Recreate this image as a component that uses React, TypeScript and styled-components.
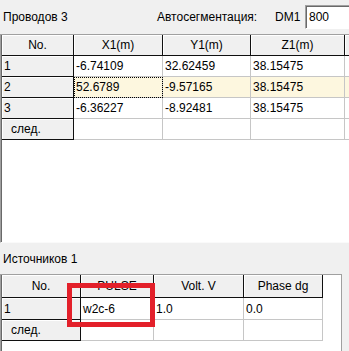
import React from "react";
import styled, { createGlobalStyle, css } from "styled-components";

type Kind = "head" | "fixed" | "next" | "data" | "sel";

type ColType = { title: string; width: number };
type RowType = { cells: string[]; kind?: "sel"; focus?: number };

const wireCols: ColType[] = [
    { title: "No.", width: 72 },
    { title: "X1(m)", width: 89 },
    { title: "Y1(m)", width: 88 },
    { title: "Z1(m)", width: 94 },
    { title: "", width: 100 },
];

const wireRows: RowType[] = [
    { cells: ["1", "-6.74109", "32.62459", "38.15475", ""] },
    { cells: ["2", "52.6789", "-9.57165", "38.15475", ""], kind: "sel", focus: 1 },
    { cells: ["3", "-6.36227", "-8.92481", "38.15475", ""] },
];

const srcCols: ColType[] = [
    { title: "No.", width: 79 },
    { title: "PULSE", width: 73 },
    { title: "Volt. V", width: 90 },
    { title: "Phase dg", width: 79 },
];

const srcRows: RowType[] = [{ cells: ["1", "w2c-6", "1.0", "0.0"] }];

const Grid = (props: {
    cols: ColType[]
    rows: RowType[]
    headH: number
    rowH: number[]
    height: number
    width?: number
}) => {
    return (
        <Frame $height={props.height} $width={props.width}>
            <Inner>
                <Row $h={props.headH}>
                    {props.cols.map((c, i) => (
                        <Cell key={i} $w={c.width} $kind="head">{c.title}</Cell>
                    ))}
                </Row>
                {props.rows.map((r, ri) => (
                    <Row key={ri} $h={props.rowH[ri]}>
                        {r.cells.map((v, ci) => (
                            <Cell
                                key={ci}
                                $w={props.cols[ci].width}
                                $kind={ci === 0 ? "fixed" : r.kind || "data"}
                                $focus={r.focus === ci}
                            >
                                {v}
                            </Cell>
                        ))}
                    </Row>
                ))}
                <Row $h={props.rowH[props.rows.length]}>
                    {props.cols.map((c, i) => (
                        <Cell key={i} $w={c.width} $kind={i === 0 ? "next" : "data"}>
                            {i === 0 ? "след." : ""}
                        </Cell>
                    ))}
                </Row>
            </Inner>
        </Frame>
    );
};

export default function App() {
    return (
        <>
            <GlobalStyle />
            <Page>
                <TopBar>
                    <Caption>Проводов 3</Caption>
                    <AutoLabel>Автосегментация:</AutoLabel>
                    <DmLabel>DM1</DmLabel>
                    <ValueBox>800</ValueBox>
                </TopBar>
                <Grid cols={wireCols} rows={wireRows} headH={21} rowH={[21, 21, 21, 21]} height={209} />
                <SectionTitle>Источников 1</SectionTitle>
                <Grid cols={srcCols} rows={srcRows} headH={23} rowH={[22, 21]} height={90} width={342} />
                <Marker />
            </Page>
        </>
    );
}

const GlobalStyle = createGlobalStyle`
    html, body {
        margin: 0;
        padding: 0;
        background: #f0f0f0;
    }
    body {
        font-family: "Liberation Sans", Arial, sans-serif;
        font-size: 12px;
        color: #000;
    }
`
const Page = styled.div`
    position: relative;
    width: 349px;
    height: 351px;
    overflow: hidden;
    background: #f0f0f0;
`
const TopBar = styled.div`
    display: flex;
    align-items: center;
    height: 34px;
    white-space: nowrap;
`
const Caption = styled.div`
    width: 154px;
    padding-left: 3px;
    flex-shrink: 0;
`
const AutoLabel = styled.div`
    width: 118px;
    flex-shrink: 0;
`
const DmLabel = styled.div`
    width: 30px;
    flex-shrink: 0;
`
const ValueBox = styled.div`
    box-sizing: border-box;
    flex-shrink: 0;
    width: 60px;
    height: 24px;
    margin-top: -1px;
    padding-left: 3px;
    display: flex;
    align-items: center;
    background: #fff;
    border: 1px solid;
    border-color: #a0a0a0 #fff #fff #a0a0a0;
    box-shadow: inset 1px 1px 0 #696969;
`
const Frame = styled.div<{ $height: number; $width?: number }>`
    box-sizing: border-box;
    height: ${p => p.$height}px;
    width: ${p => (p.$width ? p.$width + "px" : "600px")};
    background: #fff;
    border-top: 1px solid #a0a0a0;
    border-left: 1px solid #a0a0a0;
    border-bottom: 1px solid #fafafa;
    border-right: 1px solid #a0a0a0;
    overflow: hidden;
`
const Inner = styled.div`
    height: 100%;
    border-left: 1px solid #696969;
`
const Row = styled.div<{ $h: number }>`
    display: flex;
    height: ${p => p.$h}px;
`
const kinds: Record<Kind, ReturnType<typeof css>> = {
    head: css`
        background: #f0f0f0;
        justify-content: center;
        border-right: 1px solid #101010;
        border-bottom: 1px solid #101010;
        box-shadow: inset 1px 1px 0 #fff;
    `,
    fixed: css`
        background: #f0f0f0;
        padding-left: 2px;
        border-right: 1px solid #101010;
        border-bottom: 1px solid #101010;
        box-shadow: inset 1px 1px 0 #fff;
    `,
    next: css`
        background: #f0f0f0;
        padding-left: 9px;
        border-right: 1px solid #101010;
        border-bottom: 1px solid #101010;
        box-shadow: inset 1px 1px 0 #fff;
    `,
    data: css`
        background: #fff;
        padding-left: 2px;
        border-right: 1px solid #c6c6c6;
        border-bottom: 1px solid #c6c6c6;
    `,
    sel: css`
        background: #fdf7df;
        padding-left: 2px;
        border-right: 1px solid #c6c6c6;
        border-bottom: 1px solid #c6c6c6;
    `,
};
const Cell = styled.div<{ $w: number; $kind: Kind; $focus?: boolean }>`
    box-sizing: border-box;
    flex-shrink: 0;
    width: ${p => p.$w}px;
    display: flex;
    align-items: center;
    white-space: nowrap;
    overflow: hidden;
    ${p => kinds[p.$kind]}
    ${p => p.$focus && css`
        outline: 1px dotted #000;
        outline-offset: -1px;
    `}
`
const SectionTitle = styled.div`
    height: 31px;
    display: flex;
    align-items: center;
    padding-left: 3px;
`
const Marker = styled.div`
    position: absolute;
    left: 67px;
    top: 283px;
    width: 88px;
    height: 44px;
    box-sizing: border-box;
    border: 5px solid #e3202a;
`
